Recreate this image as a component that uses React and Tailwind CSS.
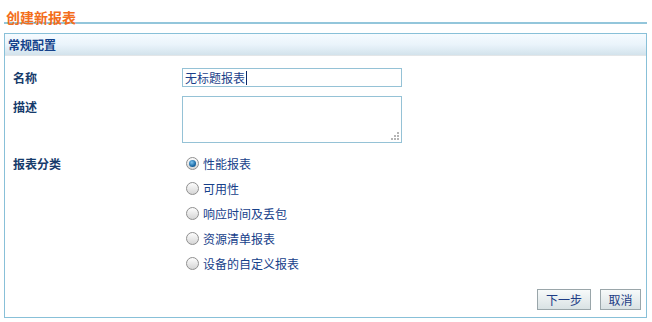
import React from "react";

const font = { fontFamily: '"Noto Sans CJK SC", "Noto Sans", sans-serif' };

function Radio({ checked, label }) {
  return (
    <div className="flex h-[25px] items-center">
      <div className="ml-[4px] flex h-[13px] w-[13px] items-center justify-center rounded-full border border-[#8f8f8f] bg-gradient-to-b from-[#fdfdfd] to-[#d6d6d6]">
        {checked && (
          <div className="h-[7px] w-[7px] rounded-full bg-[radial-gradient(circle_at_40%_35%,#7fc4ef,#1a6aa6_60%,#0d3f6e)]" />
        )}
      </div>
      <span className="ml-[4px] text-[12px] leading-none text-[#16408a]">{label}</span>
    </div>
  );
}

export default function App() {
  const options = ["性能报表", "可用性", "响应时间及丢包", "资源清单报表", "设备的自定义报表"];
  return (
    <div style={font} className="h-[322px] w-[652px] overflow-hidden bg-white pl-[4px] pr-[5px]">
      <div className="h-[24px] border-b-2 border-[#93c6db] pl-[2px] pt-[4px]">
        <span className="text-[14px] font-bold leading-[16px] text-[#f36e1c]">创建新报表</span>
      </div>
      <div className="mt-[9px] h-[285px] w-[643px] border border-[#88c0d8]">
        <div className="flex h-[22px] items-center border-b border-[#e3e6e8] bg-gradient-to-b from-[#f6fbff] via-[#eaf4fb] to-[#d3e3ec] pl-[3px]">
          <span className="text-[12px] font-bold leading-none text-[#15428b]">常规配置</span>
        </div>
        <div className="flex flex-col">
          <div className="mt-[12px] flex items-center">
            <div className="w-[177px] pl-[8px] text-[12px] font-bold text-[#163b6b]">名称</div>
            <div className="flex h-[19px] w-[220px] items-center border border-[#95c2d6] pl-[2px]">
              <span className="text-[12px] leading-none text-[#1b3f8a]">无标题报表</span>
              <span className="ml-[1px] h-[14px] w-px bg-[#0b2a6a]" />
            </div>
          </div>
          <div className="mt-[9px] flex items-start">
            <div className="w-[177px] pl-[8px] pt-[2px] text-[12px] font-bold text-[#163b6b]">描述</div>
            <div className="relative h-[47px] w-[220px] border border-[#95c2d6]">
              <div className="absolute bottom-[2px] right-[2px] grid grid-cols-3 gap-[1px]">
                <span className="h-[2px] w-[2px]" />
                <span className="h-[2px] w-[2px]" />
                <span className="h-[2px] w-[2px] bg-[#b5b5b5]" />
                <span className="h-[2px] w-[2px]" />
                <span className="h-[2px] w-[2px] bg-[#b5b5b5]" />
                <span className="h-[2px] w-[2px] bg-[#b5b5b5]" />
                <span className="h-[2px] w-[2px] bg-[#b5b5b5]" />
                <span className="h-[2px] w-[2px] bg-[#b5b5b5]" />
                <span className="h-[2px] w-[2px] bg-[#b5b5b5]" />
              </div>
            </div>
          </div>
          <div className="mt-[8px] flex items-start">
            <div className="flex h-[25px] w-[177px] items-center pl-[8px] text-[12px] font-bold text-[#163b6b]">报表分类</div>
            <div className="flex flex-col">
              {options.map((o, i) => (
                <Radio key={o} checked={i === 0} label={o} />
              ))}
            </div>
          </div>
          <div className="mt-[13px] flex justify-end gap-[9px] pr-[5px]">
            <button className="h-[21px] w-[54px] border border-[#9aa6aa] bg-gradient-to-b from-[#f7fafa] to-[#d9e2e4] text-[12px] leading-none text-[#1d3c85]">下一步</button>
            <button className="h-[21px] w-[41px] border border-[#9aa6aa] bg-gradient-to-b from-[#f7fafa] to-[#d9e2e4] text-[12px] leading-none text-[#1d3c85]">取消</button>
          </div>
        </div>
      </div>
    </div>
  );
}
